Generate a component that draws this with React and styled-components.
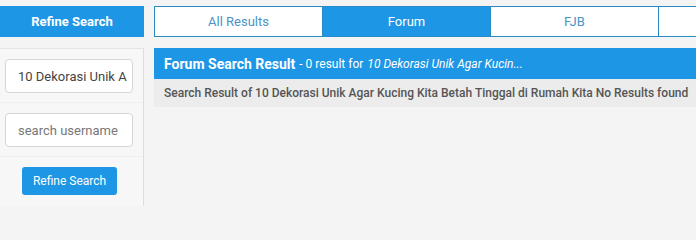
import React from "react";
import styled, { createGlobalStyle } from "styled-components";

const GlobalStyle = createGlobalStyle`
	html, body {
		margin: 0;
		padding: 0;
		height: 206px;
		background: #f4f4f4;
		font-family: Roboto, "Liberation Sans", Arial, sans-serif;
		overflow: hidden;
	}
`;

const Page = styled.div`
	display: flex;
	align-items: stretch;
	gap: 10px;
	padding-top: 6px;
	height: 200px;
	overflow: hidden;
`;

const Sidebar = styled.aside`
	flex: 0 0 144px;
	display: flex;
	flex-direction: column;
	gap: 11px;
`;

const SideTitle = styled.div`
	flex: 0 0 31px;
	background: #1e96e6;
	color: #fff;
	font-size: 13px;
	font-weight: 700;
	display: flex;
	align-items: center;
	justify-content: center;
`;

const SidePanel = styled.div`
	flex: 1;
	background: #f7f7f7;
	border-top: 1px solid #e4e4e4;
	border-right: 1px solid #dedede;
`;

const Field = styled.div`
	padding: 10px 10px 9px 5px;
	border-bottom: 1px solid #efefef;
`;

const Input = styled.input`
	box-sizing: border-box;
	width: 128px;
	height: 34px;
	padding: 0 0 0 12px;
	border: 1px solid #d6d6d6;
	border-radius: 4px;
	background: #fff;
	font-family: inherit;
	font-size: 13px;
	color: #444;
	outline: none;

	&::placeholder {
		color: #777;
	}
`;

const ButtonRow = styled.div`
	padding: 10px 0 0 22px;
`;

const Button = styled.button`
	width: 95px;
	height: 28px;
	border: none;
	border-radius: 3px;
	background: #1e96e6;
	color: #fff;
	font-family: inherit;
	font-size: 12px;
	cursor: pointer;
`;

const Main = styled.main`
	flex: 1;
	min-width: 0;
	display: flex;
	flex-direction: column;
	gap: 11px;
	overflow: hidden;
`;

const Tabs = styled.nav`
	display: flex;
	width: 672px;
	height: 31px;
	border: 1px solid #2a8bc4;
	box-sizing: border-box;
`;

const Tab = styled.div`
	flex: 0 0 168px;
	display: flex;
	align-items: center;
	justify-content: center;
	font-size: 13px;
	background: ${(p) => (p.$active ? "#1e96e6" : "#fff")};
	color: ${(p) => (p.$active ? "#fff" : "#4b94c8")};
	border-right: 1px solid #2a8bc4;
	box-sizing: border-box;
`;

const ResultHead = styled.div`
	height: 31px;
	background: #1e96e6;
	color: #fff;
	display: flex;
	align-items: center;
	padding-left: 10px;
	font-size: 12px;
	white-space: nowrap;
`;

const HeadTitle = styled.strong`
	font-size: 14px;
	font-weight: 700;
	margin-right: 4px;
`;

const Query = styled.em`
	margin-left: 4px;
`;

const ResultRow = styled.div`
	height: 28px;
	background: #ececec;
	color: #555;
	font-size: 12px;
	font-weight: 500;
	display: flex;
	align-items: center;
	padding-left: 10px;
	white-space: nowrap;
`;

const Results = styled.section`
	display: flex;
	flex-direction: column;
`;

const App = () => {
	return (
		<>
			<GlobalStyle />
			<Page>
				<Sidebar>
					<SideTitle>Refine Search</SideTitle>
					<SidePanel>
						<Field>
							<Input type="text" defaultValue="10 Dekorasi Unik A" />
						</Field>
						<Field>
							<Input type="text" placeholder="search username" />
						</Field>
						<ButtonRow>
							<Button>Refine Search</Button>
						</ButtonRow>
					</SidePanel>
				</Sidebar>
				<Main>
					<Tabs>
						<Tab>All Results</Tab>
						<Tab $active>Forum</Tab>
						<Tab>FJB</Tab>
						<Tab />
					</Tabs>
					<Results>
						<ResultHead>
							<HeadTitle>Forum Search Result</HeadTitle>- 0 result for
							<Query>10 Dekorasi Unik Agar Kucin...</Query>
						</ResultHead>
						<ResultRow>
							Search Result of 10 Dekorasi Unik Agar Kucing Kita Betah Tinggal di Rumah Kita No Results found
						</ResultRow>
					</Results>
				</Main>
			</Page>
		</>
	);
};

export default App;
